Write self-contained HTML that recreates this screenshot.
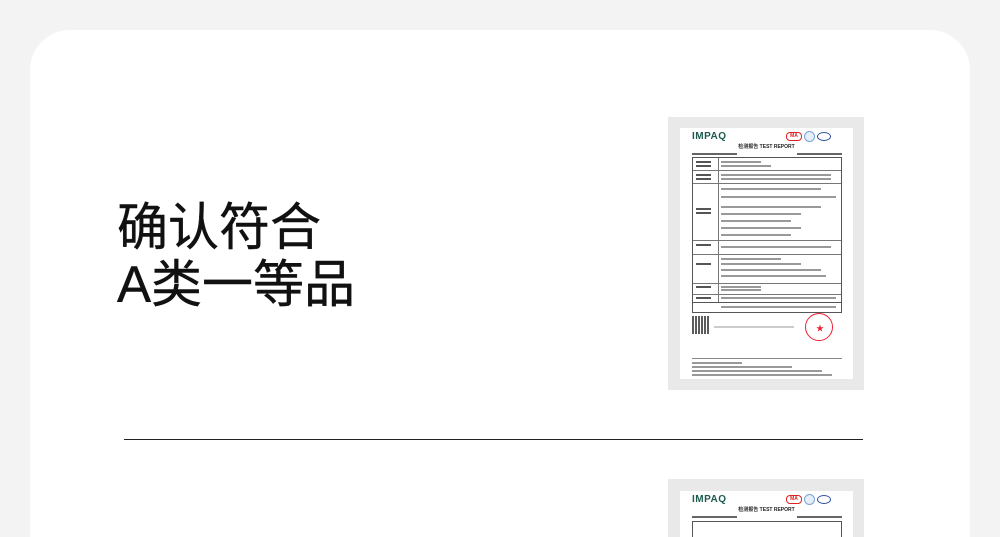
<!DOCTYPE html>
<html><head><meta charset="utf-8"><style>
*{margin:0;padding:0;box-sizing:border-box}
html{width:1000px;height:537px;overflow:hidden}
body{width:1000px;height:537px;background:#f3f3f3;position:relative;overflow:hidden;font-family:"Liberation Sans","Noto Sans CJK SC",sans-serif}
.card{position:absolute;left:30px;top:30px;width:940px;height:507px;background:#fff;border-radius:40px 40px 0 0}
.t{position:absolute;left:117px;font-size:51px;line-height:57px;color:#111;font-family:"Liberation Sans","Noto Sans CJK SC",sans-serif;-webkit-text-stroke:0.4px #111}
.hr{position:absolute;left:124px;top:439px;width:739px;height:1px;background:#222}
.frame{position:absolute;left:668px;width:196px;height:273px;background:#e9e9e9;overflow:hidden}
.doc{position:absolute;left:12px;top:11px;width:173px;height:251px;background:#fff;overflow:hidden}
.logo{position:absolute;left:12px;top:3px;font-size:10px;font-weight:bold;color:#1d5a4e;letter-spacing:.5px}
.title{position:absolute;left:0;width:173px;top:15px;text-align:center;font-size:5px;font-weight:bold;color:#222}
.ma{position:absolute;left:106px;top:4px;width:16px;height:9px;border:1px solid #d22;border-radius:4px;font-size:5px;color:#d22;text-align:center;line-height:7px;font-weight:bold}
.c1{position:absolute;left:124px;top:3px;width:11px;height:11px;border-radius:50%;border:1px solid #7aa3d6;background:#e6eef8}
.c2{position:absolute;left:137px;top:4px;width:14px;height:9px;border-radius:50%;border:1px solid #2a4f9c}
.g{position:absolute;background:#bbb}
.tb{position:absolute;left:12px;width:150px;border:1px solid #555}
.ln{position:absolute;height:1px;background:#777;left:0;right:0}
.tx{position:absolute;height:2px;background:#999}
</style></head><body>
<div class="card"></div>
<div class="t" style="top:199px">确认符合</div>
<div class="t" style="top:256px">A类一等品</div>
<div class="hr"></div>

<div class="frame" style="top:117px"><div class="doc">
<div class="logo">IMPAQ</div><div class="ma">MA</div><div class="c1"></div><div class="c2"></div>
<div class="title">检测报告 TEST REPORT</div>
<div class="tx" style="left:12px;top:25px;width:45px;background:#666"></div>
<div class="tx" style="left:117px;top:25px;width:45px;background:#666"></div>
<div class="tb" style="top:29px;height:146px">
<div class="ln" style="top:12px"></div><div class="ln" style="top:25px"></div><div class="ln" style="top:82px"></div>
<div class="ln" style="top:96px"></div><div class="ln" style="top:125px"></div><div class="ln" style="top:136px"></div>
<div style="position:absolute;left:25px;top:0;bottom:0;width:1px;background:#777"></div>
<div class="tx" style="left:3px;top:3px;width:15px;background:#555"></div><div class="tx" style="left:3px;top:7px;width:15px;background:#555"></div>
<div class="tx" style="left:3px;top:16px;width:15px;background:#555"></div><div class="tx" style="left:3px;top:20px;width:15px;background:#555"></div>
<div class="tx" style="left:3px;top:50px;width:15px;background:#555"></div><div class="tx" style="left:3px;top:54px;width:15px;background:#555"></div>
<div class="tx" style="left:3px;top:86px;width:15px;background:#555"></div><div class="tx" style="left:3px;top:105px;width:15px;background:#555"></div>
<div class="tx" style="left:3px;top:128px;width:15px;background:#555"></div><div class="tx" style="left:3px;top:139px;width:15px;background:#555"></div>
<div class="tx" style="left:28px;top:3px;width:40px"></div><div class="tx" style="left:28px;top:7px;width:50px"></div>
<div class="tx" style="left:28px;top:16px;width:110px"></div><div class="tx" style="left:28px;top:20px;width:110px"></div>
<div class="tx" style="left:28px;top:30px;width:100px"></div><div class="tx" style="left:28px;top:38px;width:115px"></div>
<div class="tx" style="left:28px;top:48px;width:100px"></div><div class="tx" style="left:28px;top:55px;width:80px"></div>
<div class="tx" style="left:28px;top:62px;width:70px"></div><div class="tx" style="left:28px;top:69px;width:80px"></div><div class="tx" style="left:28px;top:76px;width:70px"></div>
<div class="tx" style="left:28px;top:88px;width:110px"></div>
<div class="tx" style="left:28px;top:100px;width:60px"></div><div class="tx" style="left:28px;top:105px;width:80px"></div><div class="tx" style="left:28px;top:111px;width:100px"></div><div class="tx" style="left:28px;top:117px;width:105px"></div>
<div class="tx" style="left:28px;top:128px;width:40px"></div><div class="tx" style="left:28px;top:131px;width:40px"></div>
<div class="tx" style="left:28px;top:139px;width:115px"></div>
</div>
<div class="tb" style="top:175px;height:10px;border-top:none"><div class="tx" style="left:28px;top:3px;width:115px"></div></div>
<div class="g" style="left:12px;top:188px;width:18px;height:18px;background:repeating-linear-gradient(90deg,#333 0 2px,#fff 2px 3px),#333;opacity:.8"></div>
<div class="tx" style="left:34px;top:198px;width:80px;background:#ccc"></div>
<div style="position:absolute;left:125px;top:185px;width:28px;height:28px;border-radius:50%;border:1.5px solid #e23"><div style="position:absolute;left:10px;top:9px;color:#e23;font-size:8px">★</div></div>
<div class="ln" style="top:230px;left:12px;right:11px;background:#888"></div>
<div class="tx" style="left:12px;top:234px;width:50px"></div><div class="tx" style="left:12px;top:238px;width:100px"></div><div class="tx" style="left:12px;top:242px;width:130px"></div><div class="tx" style="left:12px;top:246px;width:140px"></div>
</div></div>

<div class="frame" style="top:479px;height:58px"><div class="doc" style="top:12px;height:46px">
<div class="logo">IMPAQ</div><div class="ma">MA</div><div class="c1"></div><div class="c2"></div>
<div class="title">检测报告 TEST REPORT</div>
<div class="tx" style="left:12px;top:25px;width:45px;background:#666"></div>
<div class="tx" style="left:117px;top:25px;width:45px;background:#666"></div>
<div class="tb" style="top:30px;height:20px"></div>
</div></div>
</body></html>
